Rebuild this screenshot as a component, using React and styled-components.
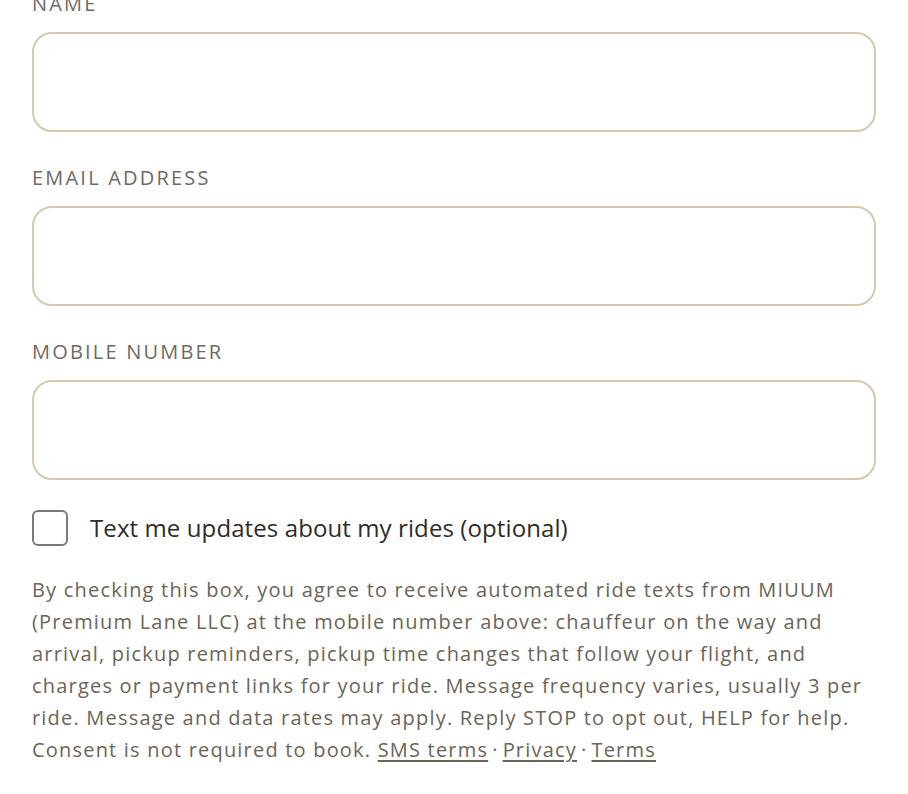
import React from 'react';
import styled, { createGlobalStyle } from 'styled-components';

const GlobalStyle = createGlobalStyle`
  html, body {
    margin: 0;
    padding: 0;
    background: #ffffff;
  }
  body {
    font-family: "Open Sans", Lato, sans-serif;
    -webkit-font-smoothing: antialiased;
  }
`;

const Form = styled.form`
  display: flex;
  flex-direction: column;
  padding: 0 32px;
  margin-top: -8px;
`;

const Field = styled.div`
  display: flex;
  flex-direction: column;
  gap: 16px;
  margin-bottom: 34px;
`;

const Label = styled.label`
  font-size: 20px;
  line-height: 24px;
  letter-spacing: 2.2px;
  text-transform: uppercase;
  color: #6e6a62;
`;

const Input = styled.input`
  box-sizing: border-box;
  width: 100%;
  height: 100px;
  border: 2px solid #d6c8ad;
  border-radius: 20px;
  background: #fff;
  padding: 0 24px;
  font-family: inherit;
  font-size: 20px;
  color: #2b2b2b;
  outline: none;
`;

const CheckRow = styled.label`
  display: flex;
  align-items: center;
  gap: 22px;
  margin-top: -4px;
  cursor: pointer;
`;

const Box = styled.span`
  box-sizing: border-box;
  flex: none;
  width: 36px;
  height: 36px;
  border: 2px solid #7a7a7a;
  border-radius: 6px;
  background: #fff;
`;

const CheckText = styled.span`
  font-size: 24px;
  line-height: 36px;
  letter-spacing: 0.1px;
  color: #2e2c29;
`;

const Fine = styled.p`
  margin: 28px 0 0;
  font-size: 20px;
  line-height: 32px;
  letter-spacing: 1.2px;
  color: #6b6458;
  white-space: nowrap;
`;

const Link = styled.a`
  color: inherit;
  text-decoration: underline;
  text-underline-offset: 3px;
  text-decoration-thickness: 1.5px;
`;

const Dot = styled.span`
  margin: 0 4px;
`;

const fields = [
  { id: 'name', label: 'Name', type: 'text' },
  { id: 'email', label: 'Email address', type: 'email' },
  { id: 'mobile', label: 'Mobile number', type: 'tel' },
];

export default function App() {
  return (
    <>
      <GlobalStyle />
      <Form onSubmit={(e) => e.preventDefault()}>
        {fields.map((f) => (
          <Field key={f.id}>
            <Label htmlFor={f.id}>{f.label}</Label>
            <Input id={f.id} type={f.type} />
          </Field>
        ))}

        <CheckRow>
          <Box />
          <CheckText>Text me updates about my rides (optional)</CheckText>
        </CheckRow>

        <Fine>
          By checking this box, you agree to receive automated ride texts from MIUUM<br />
          (Premium Lane LLC) at the mobile number above: chauffeur on the way and<br />
          arrival, pickup reminders, pickup time changes that follow your flight, and<br />
          charges or payment links for your ride. Message frequency varies, usually 3 per<br />
          ride. Message and data rates may apply. Reply STOP to opt out, HELP for help.<br />
          Consent is not required to book. <Link href="#">SMS terms</Link>
          <Dot>·</Dot>
          <Link href="#">Privacy</Link>
          <Dot>·</Dot>
          <Link href="#">Terms</Link>
        </Fine>
      </Form>
    </>
  );
}
